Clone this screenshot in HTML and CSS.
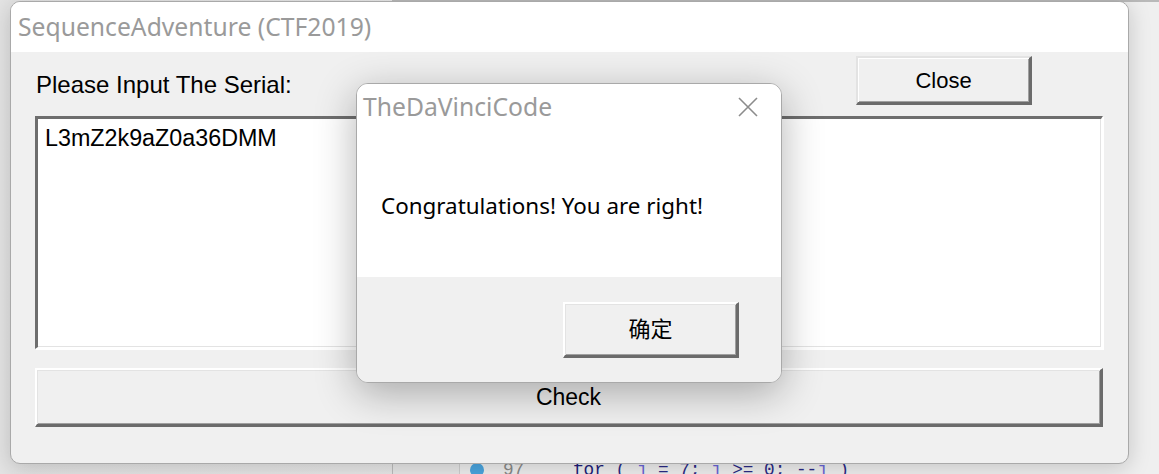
FILE: index.html
```html
<!DOCTYPE html>
<html lang="en">
<head>
<meta charset="utf-8">
<title>SequenceAdventure (CTF2019)</title>
<link rel="stylesheet" href="styles.css">
</head>
<body>
<div class="desktop">
  <div class="ide">
    <div class="ide-side"></div>
    <div class="ide-gutter"></div>
    <div class="code-line">
      <span class="bp"></span>
      <span class="ln">97</span>
      <span class="code"><span class="kw">for</span> ( <span class="var">j</span> = 7; <span class="var">j</span> &gt;= 0; --<span class="var">j</span> )</span>
    </div>
  </div>

  <div class="window main">
    <div class="titlebar">SequenceAdventure (CTF2019)</div>
    <div class="client">
      <div class="top-row">
        <span class="label">Please Input The Serial:</span>
        <button class="btn close-btn">Close</button>
      </div>
      <div class="serial">L3mZ2k9aZ0a36DMM</div>
      <button class="btn check-btn">Check</button>
    </div>
  </div>

  <div class="window dialog">
    <div class="dlg-title">
      <span class="dlg-title-text">TheDaVinciCode</span>
      <svg class="dlg-x" width="20" height="20" viewBox="0 0 20 20" aria-hidden="true">
        <path d="M1 1 L19 19 M19 1 L1 19" stroke="#8c8c8c" stroke-width="1.6" fill="none"/>
      </svg>
    </div>
    <div class="dlg-body">Congratulations! You are right!</div>
    <div class="dlg-footer">
      <button class="btn ok-btn">确定</button>
    </div>
  </div>
</div>
</body>
</html>
```

FILE: styles.css
```css
* { box-sizing: border-box; }

html, body {
  margin: 0;
  padding: 0;
}

body {
  width: 1159px;
  height: 474px;
  overflow: hidden;
  background: #e6e6e6;
}

.desktop {
  position: relative;
  width: 1159px;
  height: 474px;
  overflow: hidden;
  background: linear-gradient(to right, #e4e4e4 0%, #ececec 60%, #f6f6f6 100%);
}

/* IDE window visible behind */
.ide {
  position: absolute;
  left: 392px;
  top: 0;
  right: 0;
  bottom: 0;
  background: #efefef;
  border-left: 1px solid #bdbdbd;
  border-top: 2px solid #b9b9b9;
  display: flex;
}

.ide-side {
  width: 67px;
  background: #e8e8e8;
  border-right: 1px solid #cfcfcf;
}

.ide-gutter {
  flex: 1;
}

.code-line {
  position: absolute;
  left: 68px;
  top: 455px;
  display: flex;
  align-items: center;
  height: 26px;
  font-family: "Liberation Mono", "DejaVu Sans Mono", monospace;
  font-size: 17.7px;
  color: #2a2a86;
  white-space: pre;
}

.bp {
  width: 14px;
  height: 14px;
  border-radius: 50%;
  background: #4ba6e0;
  margin-left: 9px;
}

.ln {
  color: #8a8a8a;
  margin-left: 19px;
  width: 70px;
}

.code .var { color: #6a66d8; }
.code .kw { color: #1e1e7a; }

/* Generic window */
.window {
  position: absolute;
  background: #f0f0f0;
  border: 1px solid #a9a9a9;
  overflow: hidden;
  display: flex;
  flex-direction: column;
}

.main {
  left: 10px;
  top: 1px;
  width: 1119px;
  height: 463px;
  border-radius: 10px;
  box-shadow: 0 4px 22px rgba(0, 0, 0, 0.18);
}

.titlebar {
  height: 50px;
  background: #ffffff;
  padding-left: 7px;
  display: flex;
  align-items: center;
  padding-bottom: 2px;
  font-family: "Noto Sans", "Open Sans", sans-serif;
  font-size: 24.7px;
  color: #9a9a9a;
}

.client {
  flex: 1;
  padding: 4px 25px 0 24px;
  display: flex;
  flex-direction: column;
  font-family: "Liberation Sans", Arial, sans-serif;
  font-size: 24px;
  color: #000;
}

.top-row {
  display: flex;
  align-items: center;
  justify-content: space-between;
  height: 49px;
  padding-right: 71px;
}

.label {
  padding-left: 1px;
  padding-top: 8px;
  font-size: 24px;
}

/* Classic 3D button */
.btn {
  font-family: "Liberation Sans", Arial, sans-serif;
  font-size: 22px;
  color: #000;
  background: #f0f0f0;
  border-style: solid;
  border-width: 2px 3px 3px 2px;
  border-color: #e3e3e3 #6b6b6b #6b6b6b #e3e3e3;
  box-shadow: inset 1px 1px #ffffff, inset -1px -1px #a0a0a0;
  padding: 0;
  margin: 0;
}

.close-btn {
  width: 176px;
  height: 49px;
  font-size: 22px;
  padding-top: 2px;
}

.serial {
  margin-top: 11px;
  height: 233px;
  background: #ffffff;
  border-style: solid;
  border-width: 3px 2px 2px 3px;
  border-color: #6e6e6e #ffffff #ffffff #6e6e6e;
  box-shadow: inset -1px -1px #e3e3e3, 1px 1px #ffffff;
  padding: 7px 7px;
  font-size: 23.3px;
  line-height: 24px;
}

.check-btn {
  margin-top: 19px;
  height: 59px;
  width: 1068px;
  border-color: #ffffff #6b6b6b #6b6b6b #ffffff;
  box-shadow: inset 1px 1px #e3e3e3, inset -1px -1px #a0a0a0;
  font-size: 23px;
}

/* Message box */
.dialog {
  left: 356px;
  top: 83px;
  width: 426px;
  height: 300px;
  border-radius: 12px;
  box-shadow: 0 10px 40px rgba(0, 0, 0, 0.3);
}

.dlg-title {
  height: 48px;
  background: #ffffff;
  display: flex;
  align-items: center;
  justify-content: space-between;
  padding: 0 23px 4px 6px;
  font-family: "Noto Sans", "Open Sans", sans-serif;
  font-size: 24.7px;
  color: #9a9a9a;
}

.dlg-x { display: block; margin-top: 2px; }

.dlg-body {
  height: 145px;
  background: #ffffff;
  padding: 58px 0 0 24px;
  font-family: "Noto Sans", "Open Sans", sans-serif;
  font-size: 22.4px;
  color: #000;
}

.dlg-footer {
  flex: 1;
  background: #f0f0f0;
  display: flex;
  justify-content: flex-end;
  align-items: flex-start;
  padding: 25px 42px 0 0;
}

.ok-btn {
  width: 176px;
  height: 56px;
  padding-bottom: 5px;
  border-color: #ffffff #6b6b6b #6b6b6b #ffffff;
  box-shadow: inset 1px 1px #e3e3e3, inset -1px -1px #a0a0a0;
  font-family: "Noto Sans CJK SC", "Noto Sans", sans-serif;
  font-size: 22px;
}
```
